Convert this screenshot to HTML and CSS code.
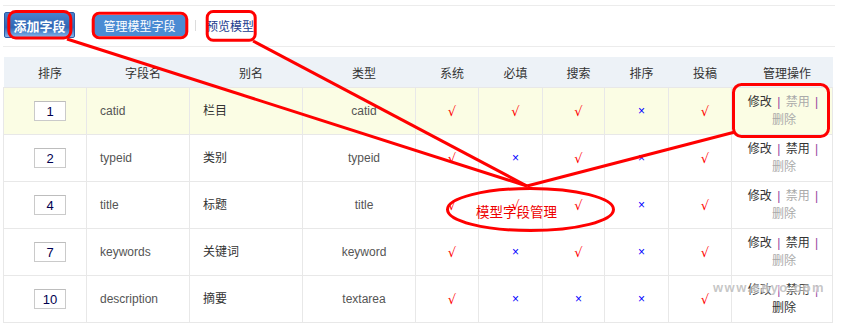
FILE: index.html
```html
<!DOCTYPE html>
<html lang="zh-CN">
<head>
  <meta charset="UTF-8" />
  <title>模型字段管理</title>
  <link rel="stylesheet" href="styles.css">
</head>
<body>
  <div class="page">
    <div class="subnav">
      <a class="tab tab-add">添加字段</a>
      <a class="tab tab-on">管理模型字段</a>
      <span class="divider"></span>
      <a class="tab tab-link">预览模型</a>
    </div>

    <table class="fields">
      <colgroup>
        <col style="width:83px"><col style="width:103px"><col style="width:113px"><col style="width:113px">
        <col style="width:63px"><col style="width:64px"><col style="width:62px"><col style="width:64px">
        <col style="width:63px"><col style="width:101px">
      </colgroup>
      <thead>
        <tr>
          <th>排序</th><th>字段名</th><th>别名</th><th>类型</th><th>系统</th>
          <th>必填</th><th>搜索</th><th>排序</th><th>投稿</th><th>管理操作</th>
        </tr>
      </thead>
      <tbody>
        <tr class="hl">
          <td><input class="order" value="1"></td>
          <td class="name">catid</td>
          <td class="alias">栏目</td>
          <td>catid</td>
          <td><span class="yes">√</span></td>
          <td><span class="yes">√</span></td>
          <td><span class="yes">√</span></td>
          <td><span class="no">×</span></td>
          <td><span class="yes">√</span></td>
          <td class="ops"><span class="op">修改</span> <span class="sep">|</span> <span class="op off">禁用</span> <span class="sep">|</span> <span class="op off">删除</span></td>
        </tr>
        <tr>
          <td><input class="order" value="2"></td>
          <td class="name">typeid</td>
          <td class="alias">类别</td>
          <td>typeid</td>
          <td><span class="yes">√</span></td>
          <td><span class="no">×</span></td>
          <td><span class="yes">√</span></td>
          <td><span class="no">×</span></td>
          <td><span class="yes">√</span></td>
          <td class="ops"><span class="op">修改</span> <span class="sep">|</span> <span class="op">禁用</span> <span class="sep">|</span> <span class="op off">删除</span></td>
        </tr>
        <tr>
          <td><input class="order" value="4"></td>
          <td class="name">title</td>
          <td class="alias">标题</td>
          <td>title</td>
          <td><span class="yes">√</span></td>
          <td><span class="yes">√</span></td>
          <td><span class="yes">√</span></td>
          <td><span class="no">×</span></td>
          <td><span class="yes">√</span></td>
          <td class="ops"><span class="op">修改</span> <span class="sep">|</span> <span class="op off">禁用</span> <span class="sep">|</span> <span class="op off">删除</span></td>
        </tr>
        <tr>
          <td><input class="order" value="7"></td>
          <td class="name">keywords</td>
          <td class="alias">关键词</td>
          <td>keyword</td>
          <td><span class="yes">√</span></td>
          <td><span class="no">×</span></td>
          <td><span class="yes">√</span></td>
          <td><span class="no">×</span></td>
          <td><span class="yes">√</span></td>
          <td class="ops"><span class="op">修改</span> <span class="sep">|</span> <span class="op">禁用</span> <span class="sep">|</span> <span class="op off">删除</span></td>
        </tr>
        <tr>
          <td><input class="order" value="10"></td>
          <td class="name">description</td>
          <td class="alias">摘要</td>
          <td>textarea</td>
          <td><span class="yes">√</span></td>
          <td><span class="no">×</span></td>
          <td><span class="no">×</span></td>
          <td><span class="no">×</span></td>
          <td><span class="yes">√</span></td>
          <td class="ops"><span class="op">修改</span> <span class="sep">|</span> <span class="op">禁用</span> <span class="sep">|</span> <span class="op">删除</span></td>
        </tr>
      </tbody>
    </table>

    <div class="watermark">www.cnyo.com</div>

    <!-- red hand-drawn notes over the screenshot -->
    <svg class="notes" width="843" height="323" viewBox="0 0 843 323">
      <g fill="none" stroke="#f00" stroke-width="3">
        <rect x="8.8" y="11.5" width="62" height="26.5" rx="7" />
        <rect x="93.2" y="13.2" width="93.6" height="24.6" rx="6" />
        <rect x="207.2" y="11.5" width="48" height="28.7" rx="6" />
        <rect x="733.5" y="84.5" width="95" height="52" rx="8" />
        <ellipse cx="530.5" cy="209.5" rx="83" ry="21" />
        <line x1="67" y1="39" x2="527" y2="186" />
        <line x1="253" y1="41" x2="527" y2="186" />
        <line x1="735" y1="132" x2="527" y2="186" />
      </g>
      <text x="476" y="217" class="note-text">模型字段管理</text>
    </svg>
  </div>
</body>
</html>
```

FILE: styles.css
```css
body {
  margin: 0;
  background: #fff;
  font-family: "Liberation Sans", "Noto Sans CJK SC", sans-serif;
  font-size: 12px;
  color: #333;
}
.page {
  position: relative;
  width: 843px;
  height: 323px;
  padding: 5px 0 0 3px;
  box-sizing: border-box;
  overflow: hidden;
}
.subnav {
  width: 832px;
  height: 38px;
  padding-bottom: 2px;
  border-top: 1px solid #ececec;
  border-bottom: 1px solid #ececec;
  display: flex;
  align-items: center;
}
.tab {
  display: flex;
  align-items: center;
  justify-content: center;
  box-sizing: border-box;
  text-decoration: none;
  cursor: pointer;
}
.tab-add {
  margin-left: 1px;
  width: 71px;
  height: 26px;
  border: 1px solid #2b5ca8;
  border-radius: 2px;
  background: linear-gradient(#4a82cc, #2f66b4 60%, #5f95d8 85%, #8ab4e6);
  color: #fff;
  font-size: 13px;
  font-weight: bold;
}
.tab-on {
  margin-left: 18px;
  width: 93px;
  height: 21px;
  background: #4b8bd3;
  color: #fff;
}
.divider {
  margin-left: 9px;
  width: 1px;
  height: 11px;
  background: #dcdcdc;
}
.tab-link {
  margin-left: 10px;
  color: #1b3c8e;
}
.fields {
  margin-top: 10px;
  width: 830px;
  border-collapse: collapse;
  table-layout: fixed;
}
.fields th {
  height: 30px;
  padding: 0 0 0 10px;
  background: #edf2f7;
  font-weight: normal;
  color: #333;
  text-align: center;
}
.fields td {
  height: 46px;
  padding: 0 0 0 10px;
  border: 1px solid #e8e8e8;
  text-align: center;
  color: #555;
}
.fields td.name,
.fields td.alias {
  text-align: left;
  padding-left: 13px;
}
.fields td.alias {
  height: 43px;
  padding-bottom: 3px;
  color: #333;
}
.fields tr.hl td {
  background: #fbfde4;
}
.order {
  width: 32px;
  height: 20px;
  box-sizing: border-box;
  padding: 0;
  border: 1px solid #cacaca;
  border-top-color: #bdbdbd;
  text-align: center;
  font-family: "Liberation Sans", sans-serif;
  font-size: 13px;
  color: #000050;
}
.yes {
  color: #f00;
  font-family: "DejaVu Sans", sans-serif;
  font-size: 13px;
}
.no {
  color: #00f;
  font-size: 12px;
}
.fields td.ops {
  padding: 0 6px 0 10px;
  line-height: 18px;
  color: #333;
}
.op {
  white-space: nowrap;
}
.sep {
  margin: 0 2px;
  color: #93449e;
}
.off {
  color: #aaa;
}
.watermark {
  position: absolute;
  left: 713px;
  top: 280px;
  font-size: 13px;
  font-weight: bold;
  letter-spacing: 1.5px;
  color: rgba(150, 150, 150, 0.55);
  text-shadow: 0 0 3px #fff, 0 0 3px #fff;
}
.notes {
  position: absolute;
  left: 0;
  top: 0;
  pointer-events: none;
}
.note-text {
  font-family: "Noto Sans CJK SC", sans-serif;
  font-size: 13.5px;
  fill: #e00;
}
```
